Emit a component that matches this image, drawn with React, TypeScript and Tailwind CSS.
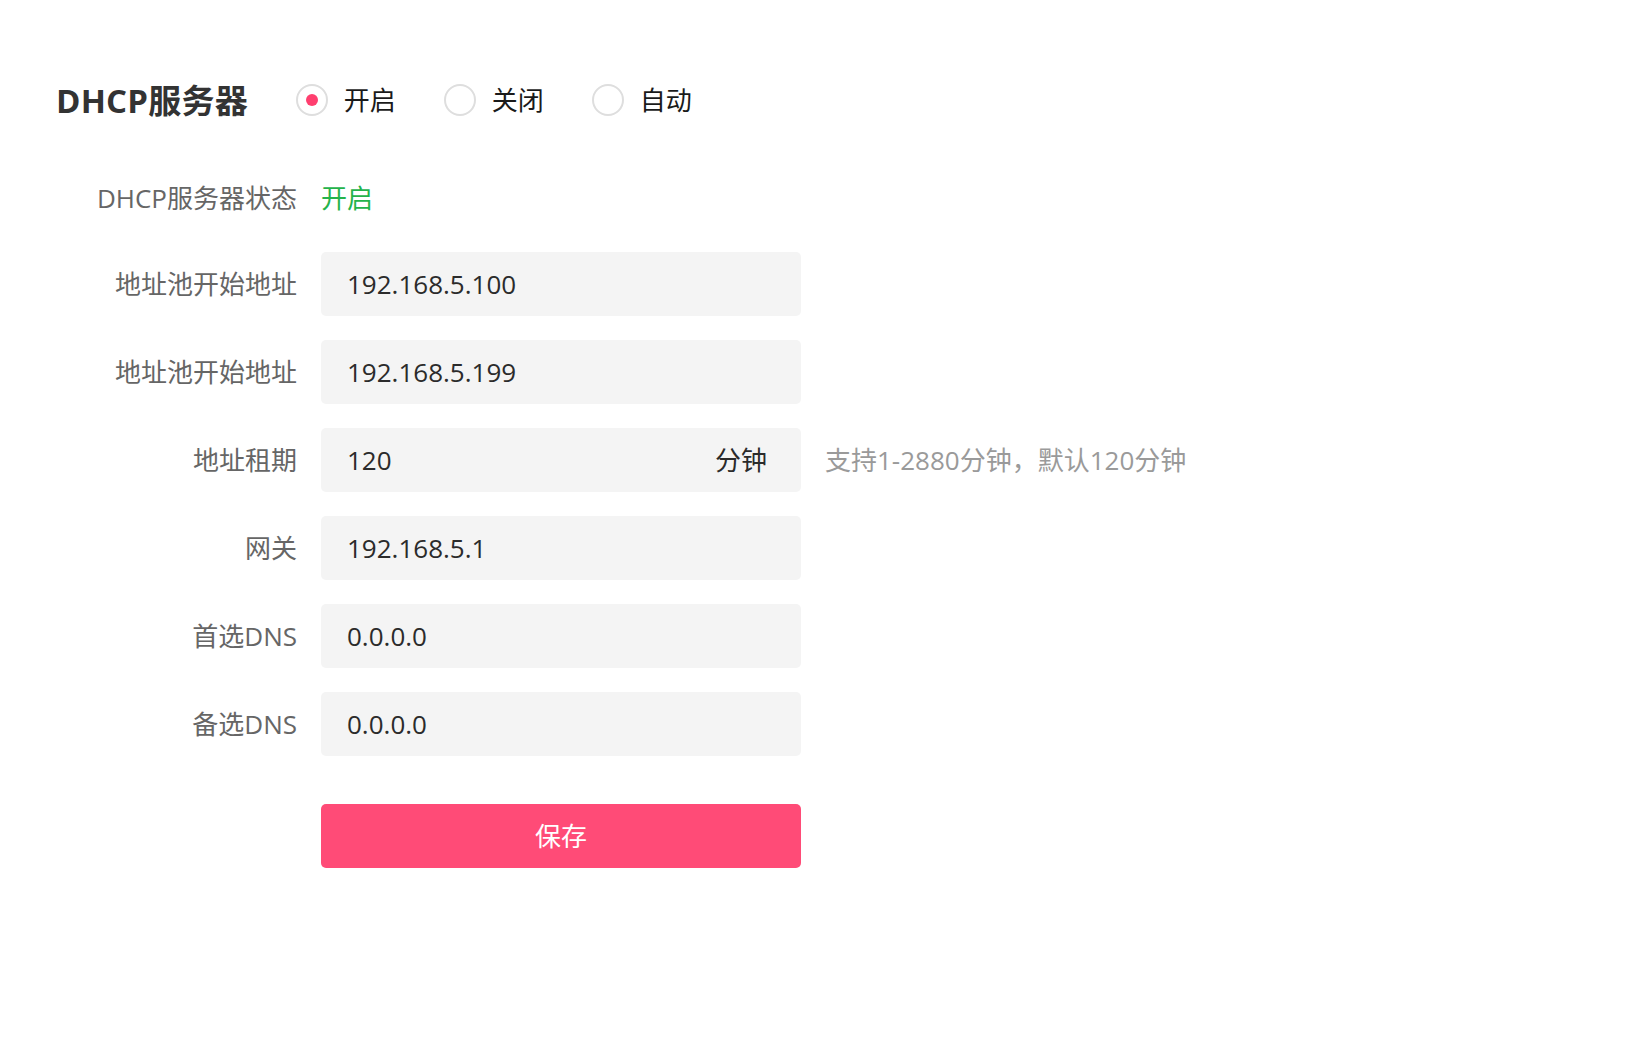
import React from "react";

const font = "font-['Open_Sans','Noto_Sans_CJK_SC',sans-serif]";

function Radio({ label, checked }: { label: string; checked?: boolean }) {
  return (
    <div className="flex items-center gap-[16px]">
      <div className="flex h-[32px] w-[32px] items-center justify-center rounded-full border-2 border-[#dedede]">
        {checked && <div className="h-[12px] w-[12px] rounded-full bg-[#ff3f6f]" />}
      </div>
      <span className="text-[26px] leading-none text-[#1a1a1a]">{label}</span>
    </div>
  );
}

function Field({ label, value, unit, hint }: { label: string; value: string; unit?: string; hint?: string }) {
  return (
    <div className="flex items-center gap-[24px]">
      <div className="w-[241px] text-right text-[26px] leading-none text-[#666666]">{label}</div>
      <div className="flex h-[64px] w-[480px] items-center justify-between rounded-[5px] bg-[#f4f4f4] pl-[26px] pr-[34px] text-[26px] text-[#2b2b2b]">
        <span>{value}</span>
        {unit && <span>{unit}</span>}
      </div>
      {hint && <div className="text-[26px] leading-none text-[#9a9a9a]">{hint}</div>}
    </div>
  );
}

export default function App() {
  return (
    <div className={`${font} min-h-[1055px] w-full bg-white pl-[56px] pt-[68px]`}>
      <div className="flex h-[64px] items-center">
        <h1 className="text-[33px] font-bold leading-none tracking-[0.2px] text-[#333333]">DHCP服务器</h1>
        <div className="ml-[48px] flex items-center gap-[48px]">
          <Radio label="开启" checked />
          <Radio label="关闭" />
          <Radio label="自动" />
        </div>
      </div>

      <div className="mt-[34px] flex h-[64px] items-center gap-[24px]">
        <div className="w-[241px] text-right text-[26px] leading-none text-[#666666]">DHCP服务器状态</div>
        <div className="text-[26px] leading-none text-[#24b34b]">开启</div>
      </div>

      <div className="mt-[22px] flex flex-col gap-[24px]">
        <Field label="地址池开始地址" value="192.168.5.100" />
        <Field label="地址池开始地址" value="192.168.5.199" />
        <Field label="地址租期" value="120" unit="分钟" hint="支持1-2880分钟，默认120分钟" />
        <Field label="网关" value="192.168.5.1" />
        <Field label="首选DNS" value="0.0.0.0" />
        <Field label="备选DNS" value="0.0.0.0" />
      </div>

      <div className="mt-[48px] flex gap-[24px]">
        <div className="w-[241px]" />
        <button className="flex h-[64px] w-[480px] items-center justify-center rounded-[5px] bg-[#ff4b77] text-[26px] text-white">
          保存
        </button>
      </div>
    </div>
  );
}
